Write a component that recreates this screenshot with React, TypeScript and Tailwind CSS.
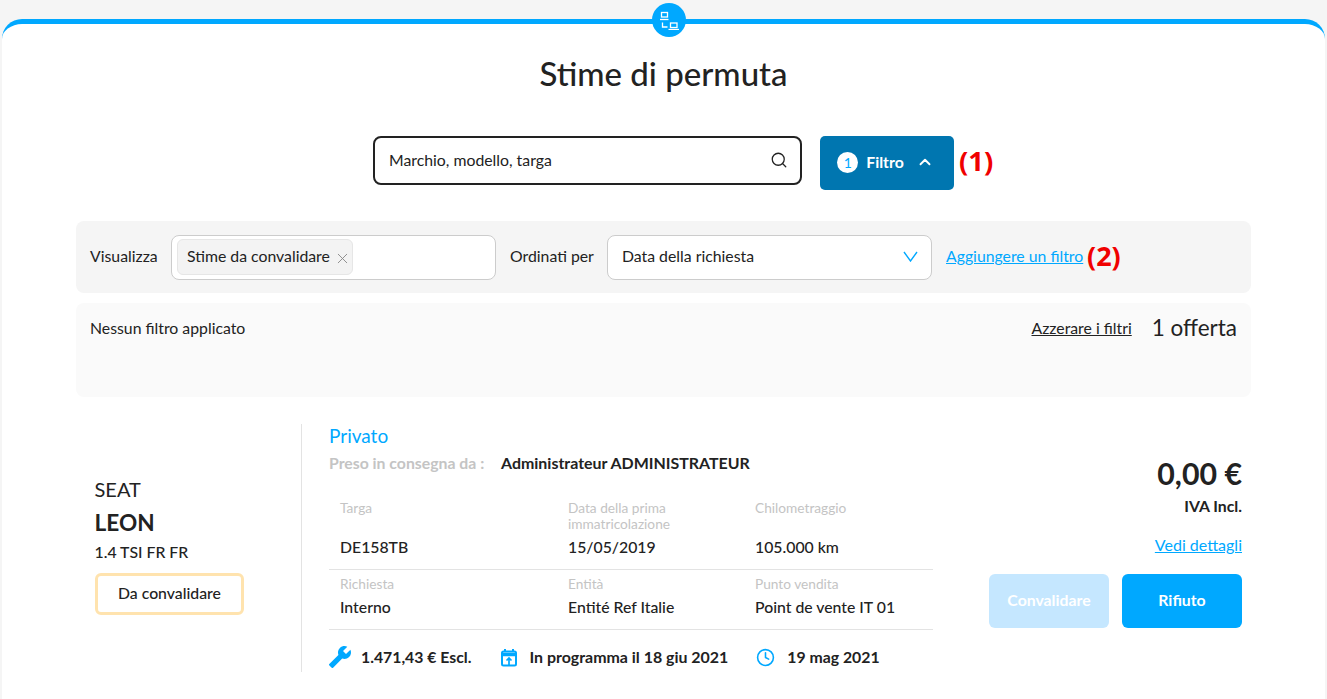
import { ChevronUp, Clock, Search, X } from "lucide-react";
import { MdBuild } from "react-icons/md";

const NetworkIcon = () => (
  <svg width="20" height="20" viewBox="0 0 20 20" fill="none" stroke="white" strokeWidth="1.3">
    <rect x="2.5" y="2.5" width="6" height="4.5" />
    <path d="M1 9.5h8.5" />
    <path d="M3.5 12.5v4.5h5" />
    <rect x="11.5" y="13" width="6.5" height="4.5" />
    <path d="M9.5 19.5H20" />
  </svg>
);

const CalendarUpIcon = () => (
  <svg width="18" height="19" viewBox="0 0 18 19" fill="none" stroke="#00a8ff" strokeWidth="2">
    <rect x="2" y="3.5" width="14" height="14" rx="1.5" />
    <path d="M2 6.5h14" strokeWidth="3.5" />
    <path d="M5 1v3M13 1v3" />
    <path d="M9 17.5V10M6.5 12.5 9 10l2.5 2.5" strokeWidth="1.7" />
  </svg>
);

const Label = ({ children }: { children: React.ReactNode }) => (
  <div className="text-[13.7px] leading-[16px] text-[#c4c4c4]">{children}</div>
);

const Value = ({ children }: { children: React.ReactNode }) => (
  <div className="text-[15.8px] leading-[20px] font-medium text-[#222]">{children}</div>
);

export default function App() {
  return (
    <div className="relative h-[699px] overflow-hidden bg-[#f5f5f5] px-[2px] pt-[19px] font-['Lato',sans-serif] text-[#222]">
      {/* round badge on top of the border */}
      <div className="absolute left-[652px] top-[3px] flex h-[34px] w-[34px] items-center justify-center rounded-full bg-[#00a8ff]">
        <NetworkIcon />
      </div>

      <div className="h-[680px] rounded-t-[20px] border-t-[5px] border-[#00a8ff] bg-white px-[74px]">
        <h1 className="pt-[27px] text-center text-[33px] leading-[44px] font-medium">Stime di permuta</h1>

        {/* search */}
        <div className="mt-[41px] flex items-start pl-[297px]">
          <div className="flex h-[49px] w-[429px] items-center justify-between rounded-[8px] border-2 border-[#222] pb-[2px] pl-[14px] pr-[12px] text-[15.8px]">
            <span>Marchio, modello, targa</span>
            <Search size={18} strokeWidth={1.7} />
          </div>
          <div className="ml-[18px] flex h-[54px] w-[134px] items-center justify-center rounded-[5px] bg-[#0076b0] pb-[2px] pr-[3px] text-[15.8px] font-bold text-white">
            <span className="mr-[8px] flex h-[21px] w-[21px] items-center justify-center rounded-full bg-white text-[14px] font-normal text-[#00a8ff]">1</span>
            Filtro
            <ChevronUp size={18} strokeWidth={2.5} className="ml-[12px]" />
          </div>
          <span className="ml-[5px] mt-[6px] font-['Open_Sans',sans-serif] text-[27.5px] leading-[38px] font-bold text-[#f00000]">(1)</span>
        </div>

        {/* filters */}
        <div className="mt-[31px] flex h-[72px] items-center rounded-[8px] bg-[#f5f5f5] pl-[14px] text-[15.8px]">
          <span className="mb-[2px] w-[68px] whitespace-nowrap">Visualizza</span>
          <div className="ml-[13px] flex h-[45px] w-[325px] items-center rounded-[8px] border border-[#ccc] bg-white pl-[5px]">
            <div className="flex h-[36px] w-[176px] items-center rounded-[6px] border border-[#e6e6e6] bg-[#f3f3f3] pb-[2px] pl-[9px]">
              Stime da convalidare
              <X size={17} strokeWidth={1.3} className="ml-[4px] mt-[4px] text-[#888]" />
            </div>
          </div>
          <span className="mb-[2px] ml-[14px] w-[84px] whitespace-nowrap">Ordinati per</span>
          <div className="ml-[13px] flex h-[45px] w-[325px] items-center justify-between rounded-[8px] border border-[#ccc] bg-white pb-[2px] pl-[14px] pr-[13px]">
            Data della richiesta
            <svg width="15" height="11" viewBox="0 0 15 11" fill="none" stroke="#00a8ff" strokeWidth="1.4">
              <path d="M1 1l6.5 9L14 1" />
            </svg>
          </div>
          <a className="mb-[2px] ml-[14px] w-[138px] whitespace-nowrap text-[#00a8ff] underline">Aggiungere un filtro</a>
          <span className="mb-[3px] ml-[3px] font-['Open_Sans',sans-serif] text-[27px] leading-[30px] font-bold text-[#f00000]">(2)</span>
        </div>

        <div className="mt-[10px] flex h-[94px] items-start justify-between rounded-[8px] bg-[#fafafa] px-[14px] pt-[12px] text-[15.8px]">
          <span className="leading-[26px]">Nessun filtro applicato</span>
          <div className="flex items-center">
            <a className="underline">Azzerare i filtri</a>
            <span className="ml-[20px] text-[22.5px] leading-[26px]">1 offerta</span>
          </div>
        </div>

        {/* offer */}
        <div className="mt-[27px] flex h-[248px]">
          <div className="flex w-[226px] flex-col items-start justify-center border-r border-[#e3e3e3] pb-[6px] pl-[18.5px]">
            <div className="text-[20px] leading-[26px]">SEAT</div>
            <div className="mt-[6px] text-[22.6px] leading-[30px] font-bold">LEON</div>
            <div className="mt-[3px] text-[15.8px] leading-[22px] font-medium">1.4 TSI FR FR</div>
            <div className="ml-[0.5px] mt-[10px] flex h-[42px] w-[149px] items-center justify-center rounded-[6px] border-[3px] border-[#ffe3ae] pb-[2px] text-[15.8px] font-medium">Da convalidare</div>
          </div>

          <div className="w-[631px] pl-[27px]">
            <div className="text-[19px] leading-[24px] text-[#00a8ff]">Privato</div>
            <div className="mt-[2px] flex text-[15.8px] font-bold leading-[26px]">
              <span className="w-[172px] text-[#c4c4c4]">Preso in consegna da :</span>
              <span className="text-[15.95px]">Administrateur ADMINISTRATEUR</span>
            </div>

            <div className="mt-[14px] grid h-[80px] grid-cols-[228px_187px_1fr] border-b border-[#e3e3e3] pl-[11px] pt-[10px]">
              <div className="flex flex-col justify-between pb-[12px]"><Label>Targa</Label><Value>DE158TB</Value></div>
              <div className="flex flex-col justify-between pb-[12px]"><Label>Data della prima<br />immatricolazione</Label><Value>15/05/2019</Value></div>
              <div className="flex flex-col justify-between pb-[12px]"><Label>Chilometraggio</Label><Value>105.000 km</Value></div>
            </div>
            <div className="grid h-[60px] grid-cols-[228px_187px_1fr] border-b border-[#e3e3e3] pl-[11px] pt-[6px]">
              <div className="flex flex-col gap-[5px]"><Label>Richiesta</Label><Value>Interno</Value></div>
              <div className="flex flex-col gap-[5px]"><Label>Entità</Label><Value>Entité Ref Italie</Value></div>
              <div className="flex flex-col gap-[5px]"><Label>Punto vendita</Label><Value>Point de vente IT 01</Value></div>
            </div>

            <div className="mt-[15px] flex items-center text-[15.8px] font-bold">
              <MdBuild size={24} className="-ml-[1px] -scale-x-100 text-[#00a8ff]" />
              <span className="ml-[9px]">1.471,43 € Escl.</span>
              <span className="ml-[29px]"><CalendarUpIcon /></span>
              <span className="ml-[11px] text-[15.95px]">In programma il 18 giu 2021</span>
              <Clock size={19} strokeWidth={2} className="ml-[28px] text-[#00a8ff]" />
              <span className="ml-[12px]">19 mag 2021</span>
            </div>
          </div>

          <div className="flex flex-1 flex-col items-end pr-[9px] pt-[30px]">
            <div className="text-[30.3px] leading-[38px] font-bold">0,00 €</div>
            <div className="mt-[4px] text-[15.8px] leading-[20px] font-bold">IVA Incl.</div>
            <a className="mt-[18px] text-[16px] leading-[22px] text-[#00a8ff] underline">Vedi dettagli</a>
            <div className="mt-[18px] flex gap-[13px] text-[15.8px] font-bold text-white">
              <button className="h-[54px] w-[120px] rounded-[6px] bg-[#c5e7ff] pb-[2px]">Convalidare</button>
              <button className="h-[54px] w-[120px] rounded-[6px] bg-[#00a8ff] pb-[2px]">Rifiuto</button>
            </div>
          </div>
        </div>
      </div>
    </div>
  );
}
